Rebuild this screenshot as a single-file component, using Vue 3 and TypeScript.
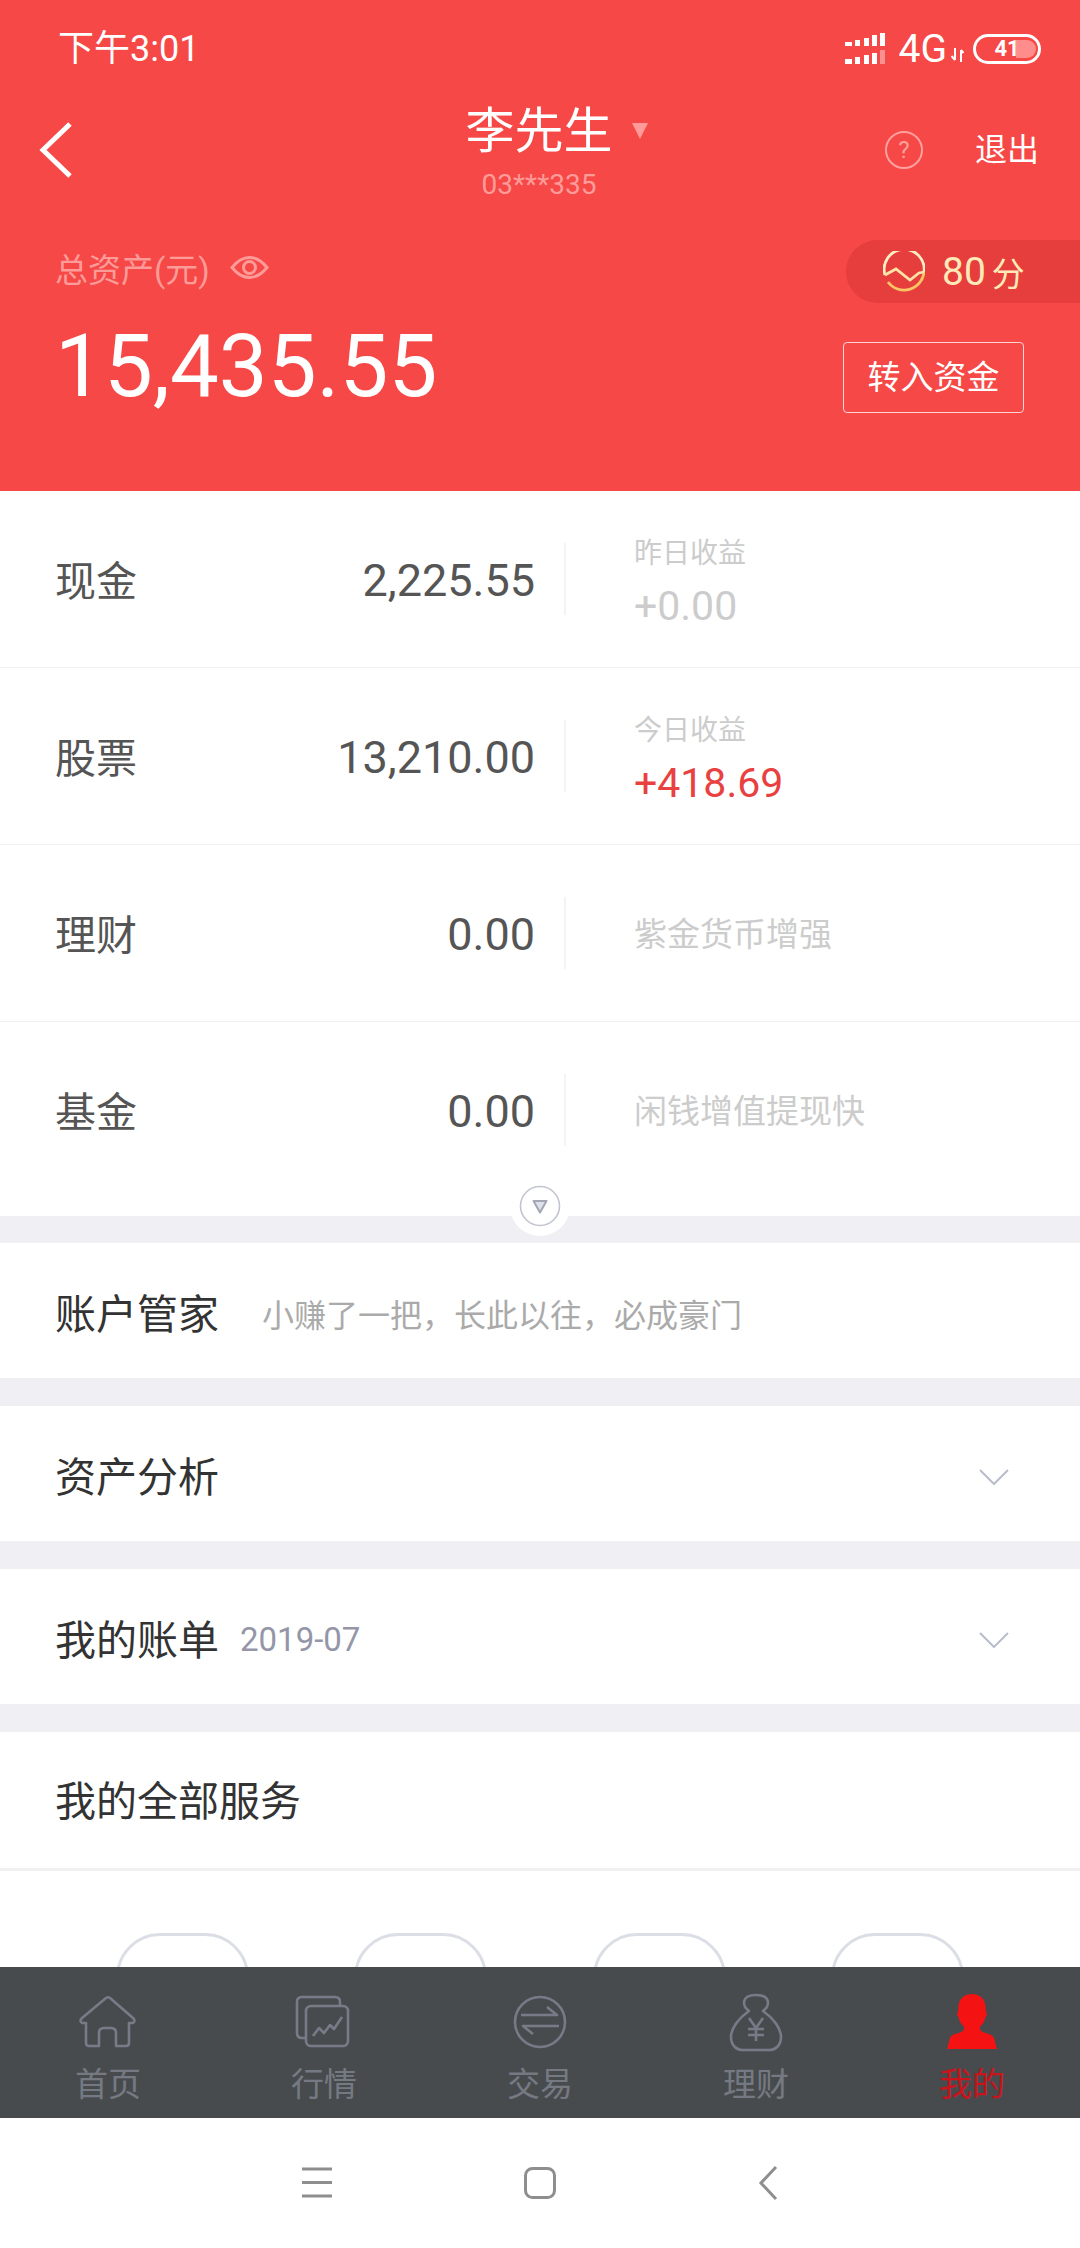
<script setup lang="ts">
interface AssetRow {
  name: string;
  amount: string;
  label?: string;
  value?: string;
  up?: boolean;
  hint?: string;
}

const assets: AssetRow[] = [
  { name: '现金', amount: '2,225.55', label: '昨日收益', value: '+0.00' },
  { name: '股票', amount: '13,210.00', label: '今日收益', value: '+418.69', up: true },
  { name: '理财', amount: '0.00', hint: '紫金货币增强' },
  { name: '基金', amount: '0.00', hint: '闲钱增值提现快' }
];

const tabs = [
  { key: 'home', label: '首页' },
  { key: 'market', label: '行情' },
  { key: 'trade', label: '交易' },
  { key: 'finance', label: '理财' },
  { key: 'mine', label: '我的' }
];

const services = [1, 2, 3, 4];
</script>

<template>
  <div class="page">
    <div class="scroll">
      <header class="hero">
        <div class="status">
          <span class="time">下午3:01</span>
          <div class="status-right">
            <svg class="signal" width="40" height="32" viewBox="0 0 40 32" fill="#fff">
              <rect x="0" y="9" width="7" height="4" />
              <rect x="10" y="7" width="5" height="6" />
              <rect x="19" y="5" width="5" height="8" />
              <rect x="27" y="2" width="5" height="11" />
              <rect x="35" y="0" width="5" height="13" />
              <rect x="0" y="26" width="7" height="5" />
              <rect x="10" y="24" width="5" height="7" />
              <rect x="19" y="22" width="5" height="9" />
              <rect x="27" y="20" width="5" height="11" />
              <rect x="35" y="17" width="5" height="14" opacity="0.4" />
            </svg>
            <span class="net">4G</span>
            <svg class="updown" width="13" height="14" viewBox="0 0 13 14" fill="none" stroke="#fff" stroke-width="2">
              <path d="M4 0V12M0.5 8L4 12" />
              <path d="M10 14V2M12.5 5L10 2" />
            </svg>
            <div class="battery">
              <span class="battery-fill"></span>
              <span class="battery-num">41</span>
            </div>
          </div>
        </div>

        <div class="title-row">
          <svg class="back" width="36" height="56" viewBox="0 0 36 56" fill="none" stroke="#fff" stroke-width="5">
            <path d="M33 2L6 28L33 54" />
          </svg>
          <div class="user">
            <div class="user-name">李先生<i class="caret"></i></div>
            <div class="user-no">03***335</div>
          </div>
          <div class="title-actions">
            <span class="help">?</span>
            <span class="logout">退出</span>
          </div>
        </div>

        <div class="total-row">
          <div class="total-label">
            <span>总资产(元)</span>
            <svg width="39" height="23" viewBox="0 0 39 23" fill="none" stroke="#fd9b99" stroke-width="3">
              <path d="M2 11.5C8 4 14 1.5 19.5 1.5C25 1.5 31 4 37 11.5C31 19 25 21.5 19.5 21.5C14 21.5 8 19 2 11.5Z" />
              <circle cx="19.5" cy="11.5" r="6" />
            </svg>
          </div>
          <div class="score">
            <svg width="42" height="42" viewBox="0 0 42 42" fill="none" stroke-width="2.8">
              <path stroke="#ffedc4" d="M2 24A20 20 0 1 1 41 21" />
              <path stroke="#fbc565" d="M5 31A20 20 0 0 0 41 21" />
              <path stroke="#ffe3a6" d="M2 24L13 18L27 29L36 22L41 21" />
            </svg>
            <span class="score-num">80</span>
            <span class="score-unit">分</span>
          </div>
        </div>

        <div class="amount-row">
          <span class="amount">15,435.55</span>
          <span class="transfer">转入资金</span>
        </div>
      </header>

      <section class="asset-list">
        <div v-for="row in assets" :key="row.name" class="asset-row">
          <div class="asset-left">
            <span class="asset-name">{{ row.name }}</span>
            <span class="asset-amount">{{ row.amount }}</span>
          </div>
          <i class="asset-divider"></i>
          <div v-if="row.label" class="asset-right">
            <div class="asset-label">{{ row.label }}</div>
            <div class="asset-value" :class="{ up: row.up }">{{ row.value }}</div>
          </div>
          <div v-else class="asset-hint">{{ row.hint }}</div>
        </div>
        <div class="expand">
          <svg width="42" height="42" viewBox="0 0 42 42">
            <circle cx="21" cy="21" r="19.5" fill="#fff" stroke="#c2c4cf" stroke-width="1.6" />
            <path d="M14.5 16H27.5L21 27.5Z" fill="#dfe0e8" stroke="#a3a6b5" stroke-width="2" stroke-linejoin="round" />
          </svg>
        </div>
      </section>

      <section class="card first">
        <span class="card-title">账户管家</span>
        <span class="card-tip">小赚了一把，长此以往，必成豪门</span>
      </section>

      <section class="card">
        <span class="card-title">资产分析</span>
        <svg class="chevron" width="30" height="16" viewBox="0 0 30 16" fill="none" stroke="#b8bccb" stroke-width="2">
          <path d="M1 1L15 15L29 1" />
        </svg>
      </section>

      <section class="card">
        <span class="card-title">我的账单</span>
        <span class="card-date">2019-07</span>
        <svg class="chevron" width="30" height="16" viewBox="0 0 30 16" fill="none" stroke="#b8bccb" stroke-width="2">
          <path d="M1 1L15 15L29 1" />
        </svg>
      </section>

      <section class="card services-head">
        <span class="card-title">我的全部服务</span>
      </section>

      <section class="services">
        <div v-for="n in services" :key="n" class="service">
          <i class="service-shape"></i>
        </div>
      </section>
    </div>

    <nav class="tabbar">
      <div v-for="tab in tabs" :key="tab.key" class="tab" :class="{ active: tab.key === 'mine' }">
        <svg width="60" height="60" viewBox="0 0 60 60" fill="none" stroke="#777b87" stroke-width="2.6" stroke-linejoin="round">
          <path v-if="tab.key === 'home'" d="M28 6Q30 4.5 32 6L55 26Q58 29 55 31H51V51Q51 54 48 54H38V41Q38 36 33 36H26Q21 36 21 41V54H11Q8 54 8 51V31H4Q1 29 4 26Z" />
          <template v-else-if="tab.key === 'market'">
            <path d="M12 46H8Q3 46 3 41V10Q3 5 8 5H41Q46 5 46 10V14" />
            <rect x="12" y="14" width="42" height="40" rx="5" />
            <path d="M19 44L25 36L30 41L36 33L40 37L48 25" />
          </template>
          <template v-else-if="tab.key === 'trade'">
            <circle cx="30" cy="30" r="25" />
            <path d="M11 23H47L37 15" />
            <path d="M49 34H13L23 42" />
          </template>
          <template v-else-if="tab.key === 'finance'">
            <path d="M23 19C16 14 15 3 30 3C45 3 44 14 37 19C47 26 55 36 55 45C55 53 50 58 43 58H17C10 58 5 53 5 45C5 36 13 26 23 19Z" />
            <path d="M23 26L30 36L37 26M22 37H38M22 43H38M30 36V49" />
          </template>
          <path v-else d="M30 2C38 2 43 7 43.5 14L44 20C45.5 20.5 45 24 43.5 25C42.5 30 40 33 38 35V38C42 42 50 41 52 46L55 57H5L8 46C10 41 18 42 22 38V35C20 33 17.5 30 16.5 25C15 24 14.5 20.5 16 20L16.5 14C17 7 22 2 30 2Z" fill="#f51212" stroke="none" />
        </svg>
        <span class="tab-label">{{ tab.label }}</span>
      </div>
    </nav>

    <div class="sysbar">
      <svg width="40" height="40" viewBox="0 0 40 40" fill="none" stroke="#8e8e8e" stroke-width="3">
        <path d="M7 6H37M7 19.5H37M7 33H37" />
      </svg>
      <svg width="40" height="40" viewBox="0 0 40 40" fill="none" stroke="#8e8e8e" stroke-width="3">
        <rect x="5.5" y="5.5" width="29" height="29" rx="7" />
      </svg>
      <svg width="40" height="40" viewBox="0 0 40 40" fill="none" stroke="#8e8e8e" stroke-width="3">
        <path d="M31 4L16 20L31 36" />
      </svg>
    </div>
  </div>
</template>

<style scoped>
.page {
  display: flex;
  flex-direction: column;
  width: 1080px;
  height: 2248px;
  overflow: hidden;
  background: #fff;
  font-family: Roboto, "Noto Sans CJK SC", sans-serif;
}

.scroll {
  flex: 1;
  min-height: 0;
  overflow: hidden;
  background: #efeff4;
}

.hero {
  height: 491px;
  background: #f64846;
  color: #fff;
}

.status {
  display: flex;
  justify-content: space-between;
  align-items: center;
  height: 98px;
  padding: 0 39px 0 58px;
}

.time {
  font-size: 36px;
  line-height: 40px;
}

.status-right {
  display: flex;
  align-items: center;
}

.net {
  margin-left: 14px;
  font-size: 39px;
  line-height: 40px;
}

.updown {
  margin: 12px 9px 0 4px;
}

.battery {
  position: relative;
  box-sizing: border-box;
  width: 68px;
  height: 30px;
  border: 3px solid #fff;
  border-radius: 15px;
  text-align: center;
}

.battery-fill {
  position: absolute;
  top: 3px;
  bottom: 3px;
  right: 2px;
  width: 20px;
  border-radius: 0 9px 9px 0;
  background: #ff8d8b;
}

.battery-num {
  position: relative;
  display: block;
  font-size: 22px;
  font-weight: 700;
  line-height: 24px;
}

.title-row {
  display: grid;
  grid-template-columns: 1fr auto 1fr;
  align-items: center;
  height: 104px;
  padding: 0 41px 0 37px;
}

.user {
  margin: 2px 0 0 2px;
  text-align: center;
}

.user-name {
  position: relative;
  font-size: 49px;
  line-height: 60px;
}

.caret {
  position: absolute;
  top: 21px;
  right: -35px;
  border-left: 8px solid transparent;
  border-right: 8px solid transparent;
  border-top: 16px solid #ff9a98;
}

.user-no {
  margin-top: 7px;
  font-size: 28px;
  line-height: 32px;
  color: #fd9b99;
}

.title-actions {
  display: flex;
  justify-content: flex-end;
  align-items: center;
}

.help {
  box-sizing: border-box;
  width: 38px;
  height: 38px;
  border: 2px solid #fda09e;
  border-radius: 50%;
  font-size: 24px;
  line-height: 34px;
  text-align: center;
  color: #fda09e;
}

.logout {
  margin-left: 52px;
  font-size: 32px;
  line-height: 40px;
}

.total-row {
  display: flex;
  justify-content: space-between;
  align-items: center;
  margin-top: 38px;
  height: 63px;
  padding-left: 55px;
}

.total-label {
  display: flex;
  align-items: center;
  gap: 20px;
  margin-top: -8px;
  font-size: 33px;
  color: #fd9b99;
}

.score {
  display: flex;
  align-items: center;
  width: 234px;
  height: 63px;
  box-sizing: border-box;
  padding-left: 37px;
  border-radius: 32px 0 0 32px;
  background: #e53e3c;
  color: #ffe9b8;
}

.score-num {
  margin-left: 17px;
  font-size: 39px;
}

.score-unit {
  margin-left: 6px;
  font-size: 33px;
}

.amount-row {
  display: flex;
  justify-content: space-between;
  align-items: center;
  margin-top: 39px;
  padding: 0 56px 0 55px;
}

.amount {
  font-size: 87px;
  line-height: 71px;
  margin-top: -22px;
}

.transfer {
  box-sizing: border-box;
  width: 181px;
  height: 71px;
  border: 1.5px solid #ffd5d4;
  border-radius: 4px;
  font-size: 33px;
  line-height: 70px;
  text-align: center;
}

.asset-list {
  position: relative;
  background: #fff;
}

.asset-row {
  display: flex;
  align-items: center;
  height: 176px;
  padding-left: 55px;
  border-bottom: 1px solid #f0f0f0;
}

.asset-row:nth-child(4) {
  box-sizing: border-box;
  height: 194px;
  padding-bottom: 18px;
  border-bottom: 0;
}

.asset-left {
  display: flex;
  justify-content: space-between;
  align-items: center;
  width: 480px;
  margin-top: -3px;
}

.asset-name {
  font-size: 41px;
  color: #555;
}

.asset-amount {
  margin-top: 5px;
  font-size: 45px;
  color: #555;
}

.asset-divider {
  width: 2px;
  height: 72px;
  margin-left: 29px;
  background: #f4f4f4;
}

.asset-right {
  margin-left: 68px;
  padding-top: 7px;
}

.asset-label {
  font-size: 28px;
  line-height: 40px;
  color: #ccc;
}

.asset-value {
  margin-top: 6px;
  font-size: 41px;
  line-height: 52px;
  color: #ccc;
}

.asset-value.up {
  color: #e8413f;
}

.asset-hint {
  margin: -3px 0 0 68px;
  font-size: 33px;
  color: #ccc;
}

.expand {
  position: absolute;
  left: 510px;
  bottom: -20px;
  display: flex;
  justify-content: center;
  align-items: center;
  width: 60px;
  height: 60px;
  border-radius: 50%;
  background: #fff;
}

.card {
  display: flex;
  align-items: center;
  height: 135px;
  margin-top: 28px;
  padding: 0 71px 0 55px;
  background: #fff;
}

.card.first {
  margin-top: 27px;
}

.card-title {
  font-size: 41px;
  color: #333;
}

.card-tip {
  margin: 4px 0 0 43px;
  font-size: 32px;
  color: #aaa;
}

.card-date {
  margin: 6px 0 0 21px;
  font-size: 33px;
  color: #9496a8;
}

.chevron {
  margin: 6px 0 0 auto;
}

.services-head {
  height: 136px;
  border-bottom: 3px solid #f0f0f0;
}

.services-head .card-title {
  margin-top: -4px;
}

.services {
  display: grid;
  grid-template-columns: repeat(4, 1fr);
  height: 300px;
  padding: 62px 63px 0;
  background: #fff;
}

.service {
  display: flex;
  justify-content: center;
}

.service-shape {
  box-sizing: border-box;
  width: 133px;
  height: 130px;
  border: 3px solid #dcdee6;
  border-radius: 44px;
}

.tabbar {
  display: grid;
  grid-template-columns: repeat(5, 1fr);
  flex: none;
  height: 151px;
  background: #484b4e;
}

.tab {
  display: flex;
  flex-direction: column;
  align-items: center;
  padding-top: 25px;
}

.tab-label {
  margin-top: 15px;
  font-size: 33px;
  line-height: 36px;
  color: #757a82;
}

.tab.active .tab-label {
  color: #c8141a;
}

.sysbar {
  display: flex;
  flex: none;
  justify-content: center;
  align-items: center;
  gap: 185px;
  height: 130px;
  background: #fff;
}
</style>

<style>
html,
body {
  background: #fff;
}
</style>
